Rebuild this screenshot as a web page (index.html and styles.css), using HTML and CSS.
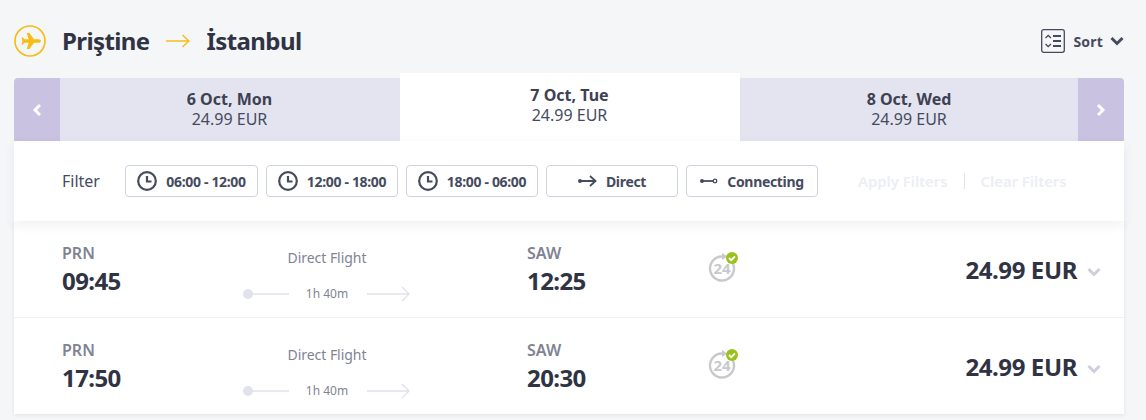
FILE: index.html
```html
<!DOCTYPE html>
<html lang="en">
<head>
<meta charset="utf-8">
<title>Flights</title>
<link rel="stylesheet" href="styles.css">
</head>
<body>
<main class="wrap">
  <header class="head">
    <svg class="plane-ico" viewBox="0 0 32 32" width="32" height="32"><circle cx="16" cy="16" r="15" fill="none" stroke="#f6bd16" stroke-width="1.700"/><path fill="#f6bd16" d="M27 16c0-1.100-1.200-1.800-2.500-1.800h-4.500L15.500 8h-2.800l2 6.200h-4.400L8.700 12.300H7.600L8.400 16l-.8 3.700h1.100l1.600-1.900h4.400l-2 6.200h2.800l4.500-6.200h4.500c1.300 0 2.500-.7 2.500-1.800z"/></svg>
    <h1 class="city">Priştine</h1>
    <svg class="route-arrow" viewBox="0 0 24 14" width="24" height="14"><path d="M0 7h23M16.500 1l6.500 6-6.500 6" fill="none" stroke="#f6bd16" stroke-width="1.500"/></svg>
    <h1 class="city">İstanbul</h1>
    <div class="sort">
      <svg viewBox="0 0 24 24" width="24" height="24"><rect x=".7" y=".7" width="22.600" height="22.600" rx="2" fill="none" stroke="#454b5e" stroke-width="1.300"/><path d="M4.500 9l2.700-2.500L10 9M4.500 15l2.700 2.500L10 15" fill="none" stroke="#454b5e" stroke-width="1.300"/><path d="M12 7h8M12 12h8M12 17h8" stroke="#454b5e" stroke-width="1.800"/></svg>
      <span class="sort-label">Sort</span>
      <svg viewBox="0 0 14 10" width="14" height="10"><path d="M1.500 2l5.500 5.500L12.500 2" fill="none" stroke="#454b5e" stroke-width="3"/></svg>
    </div>
  </header>

  <nav class="days">
    <button class="day-nav day-nav-prev"><svg viewBox="0 0 10 14" width="10" height="14"><path d="M8 2L3 7l5 5" fill="none" stroke="#fff" stroke-width="3"/></svg></button>
    <div class="day"><strong>6 Oct, Mon</strong><span>24.99 EUR</span></div>
    <div class="day day-active"><strong>7 Oct, Tue</strong><span>24.99 EUR</span></div>
    <div class="day day-last"><strong>8 Oct, Wed</strong><span>24.99 EUR</span></div>
    <button class="day-nav day-nav-next"><svg viewBox="0 0 10 14" width="10" height="14"><path d="M2 2l5 5-5 5" fill="none" stroke="#fff" stroke-width="3"/></svg></button>
  </nav>

  <section class="filters">
    <span class="filter-label">Filter</span>
    <button class="chip"><svg viewBox="0 0 20 20" width="20" height="20"><circle cx="10" cy="10" r="8.800" fill="none" stroke="#454b5e" stroke-width="2.200"/><path d="M10 5v5.500h4.500" fill="none" stroke="#454b5e" stroke-width="2.200"/></svg>06:00 - 12:00</button>
    <button class="chip"><svg viewBox="0 0 20 20" width="20" height="20"><circle cx="10" cy="10" r="8.800" fill="none" stroke="#454b5e" stroke-width="2.200"/><path d="M10 5v5.500h4.500" fill="none" stroke="#454b5e" stroke-width="2.200"/></svg>12:00 - 18:00</button>
    <button class="chip"><svg viewBox="0 0 20 20" width="20" height="20"><circle cx="10" cy="10" r="8.800" fill="none" stroke="#454b5e" stroke-width="2.200"/><path d="M10 5v5.500h4.500" fill="none" stroke="#454b5e" stroke-width="2.200"/></svg>18:00 - 06:00</button>
    <button class="chip"><svg viewBox="0 0 19 12" width="19" height="12"><circle cx="2" cy="6" r="2" fill="#454b5e"/><path d="M1 6h16.500M12 1l5.500 5-5.500 5" fill="none" stroke="#454b5e" stroke-width="1.800"/></svg>Direct</button>
    <button class="chip"><svg viewBox="0 0 18 8" width="18" height="8"><circle cx="2" cy="4" r="2" fill="#454b5e"/><path d="M1 4h12" stroke="#454b5e" stroke-width="1.800"/><circle cx="15" cy="4" r="1.800" fill="#fff" stroke="#454b5e" stroke-width="1.300"/></svg>Connecting</button>
    <div class="filter-actions">
      <span>Apply Filters</span>
      <i class="filter-sep"></i>
      <span>Clear Filters</span>
    </div>
  </section>

  <section class="flights">
    <article class="flight">
      <div class="point"><span class="code">PRN</span><span class="time">09:45</span></div>
      <div class="route">
        <span class="route-type">Direct Flight</span>
        <div class="route-line">
          <svg viewBox="0 0 46 10" width="46" height="10"><circle cx="5" cy="5" r="5" fill="#e0e2ed"/><path d="M5 5h41" stroke="#e0e2ed" stroke-width="1.400"/></svg>
          <span class="route-time">1h 40m</span>
          <svg viewBox="0 0 44 16" width="44" height="16"><path d="M0 8h42M35 1l7 7-7 7" fill="none" stroke="#e0e2ed" stroke-width="1.400"/></svg>
        </div>
      </div>
      <div class="point point-end"><span class="code">SAW</span><span class="time">12:25</span></div>
      <svg class="badge" viewBox="0 0 32 32" width="32" height="32"><path d="M21.700 7.300A12 12 0 1 1 14 4.500" fill="none" stroke="#c8c9cc" stroke-width="2.400"/><path d="M14 1l5.500 3.500L14 8z" fill="#c8c9cc"/><text x="14" y="22" class="badge-text">24</text><circle cx="24" cy="6" r="6" fill="#9bc21c"/><path d="M21 6l2.200 2.200L27 4.400" fill="none" stroke="#fff" stroke-width="1.800"/></svg>
      <div class="price"><span>24.99 EUR</span><svg class="price-chevron" viewBox="0 0 14 10" width="14" height="10"><path d="M1.500 2l5.500 5.500L12.500 2" fill="none" stroke="#cdd0dc" stroke-width="3"/></svg></div>
    </article>
    <article class="flight">
      <div class="point"><span class="code">PRN</span><span class="time">17:50</span></div>
      <div class="route">
        <span class="route-type">Direct Flight</span>
        <div class="route-line">
          <svg viewBox="0 0 46 10" width="46" height="10"><circle cx="5" cy="5" r="5" fill="#e0e2ed"/><path d="M5 5h41" stroke="#e0e2ed" stroke-width="1.400"/></svg>
          <span class="route-time">1h 40m</span>
          <svg viewBox="0 0 44 16" width="44" height="16"><path d="M0 8h42M35 1l7 7-7 7" fill="none" stroke="#e0e2ed" stroke-width="1.400"/></svg>
        </div>
      </div>
      <div class="point point-end"><span class="code">SAW</span><span class="time">20:30</span></div>
      <svg class="badge" viewBox="0 0 32 32" width="32" height="32"><path d="M21.700 7.300A12 12 0 1 1 14 4.500" fill="none" stroke="#c8c9cc" stroke-width="2.400"/><path d="M14 1l5.500 3.500L14 8z" fill="#c8c9cc"/><text x="14" y="22" class="badge-text">24</text><circle cx="24" cy="6" r="6" fill="#9bc21c"/><path d="M21 6l2.200 2.200L27 4.400" fill="none" stroke="#fff" stroke-width="1.800"/></svg>
      <div class="price"><span>24.99 EUR</span><svg class="price-chevron" viewBox="0 0 14 10" width="14" height="10"><path d="M1.500 2l5.500 5.500L12.500 2" fill="none" stroke="#cdd0dc" stroke-width="3"/></svg></div>
    </article>
  </section>
</main>
</body>
</html>
```

FILE: styles.css
```css
* { box-sizing: border-box; }
html, body { margin: 0; padding: 0; height: 100%; overflow: hidden; }
body { background: #f5f6f8; font-family: "Noto Sans", "Open Sans", sans-serif; color: #2f3343; }
.wrap { margin: 0 22px 0 14px; }

.head { display: flex; align-items: center; height: 73px; padding-top: 9px; }
.plane-ico { margin-right: 16px; }
.city { margin: 0; font-size: 24px; font-weight: 700; letter-spacing: -.6px; line-height: 32px; color: #2f3343; }
.route-arrow { margin: 0 17px 0 16px; }
.sort { margin-left: auto; display: flex; align-items: center; }
.sort-label { margin: 0 7px 0 8px; font-size: 14px; font-weight: 700; letter-spacing: .2px; color: #454b5e; }

.days { display: flex; align-items: flex-end; height: 68px; }
.day-nav { flex: none; width: 46px; height: 63px; border: 0; padding: 0; background: #c9c2e0; display: flex; align-items: center; justify-content: center; }
.day-nav-prev { border-top-left-radius: 4px; }
.day-nav-next { border-top-right-radius: 4px; }
.day { flex: none; width: 340px; height: 63px; padding: 0 1px 1px 0; background: #e4e4f0; display: flex; flex-direction: column; align-items: center; justify-content: center; font-size: 16px; line-height: 20px; color: #454b5e; }
.day strong { font-weight: 700; color: #3d4152; }
.day-active { height: 68px; background: #fff; padding-bottom: 4px; }
.day-last { width: 338px; padding-right: 0; }

.filters { display: flex; align-items: center; height: 80px; padding-left: 48px; background: #fff; box-shadow: 0 4px 10px rgba(60, 70, 100, .08); position: relative; }
.filter-label { width: 63px; font-size: 16px; color: #454b5e; }
.chip { width: 132px; height: 32px; margin-right: 8px; padding: 0; border: 1px solid #cfd2e0; border-radius: 4px; background: #fff; display: flex; align-items: center; justify-content: center; gap: 9px; font-family: inherit; font-size: 14px; font-weight: 700; letter-spacing: -.33px; color: #454b5e; }
.filter-label + .chip { width: 133px; }
.filter-actions { display: flex; align-items: center; margin-left: 32px; font-size: 15px; font-weight: 600; letter-spacing: -.08px; color: #eceef4; }
.filter-sep { width: 1px; height: 16px; margin: 0 16px; background: #e0e2ed; }

.flights { background: #fff; box-shadow: 0 1px 4px rgba(60, 70, 100, .12); }
.flight { display: flex; height: 97px; padding-left: 48px; position: relative; border-bottom: 1px solid #f0f1f5; }
.flight:last-child { height: 96px; border-bottom: 0; }
.point { width: 155px; display: flex; flex-direction: column; padding-top: 21px; }
.point-end { width: 181px; }
.code { font-size: 16px; line-height: 22px; font-weight: 600; color: #7f8392; }
.time { font-size: 24px; line-height: 34px; font-weight: 700; letter-spacing: -.6px; color: #2f3343; }
.route { width: 168px; margin: 0 116px 0 26px; padding: 27px 0 0; display: flex; flex-direction: column; align-items: center; }
.route-type { font-size: 14px; line-height: 20px; letter-spacing: -.05px; color: #7f8392; }
.route-line { width: 100%; display: flex; justify-content: space-between; align-items: center; margin-top: 17px; font-size: 12px; color: #7f8392; }
.route-time { padding-right: 2px; }
.badge { margin-top: 31px; }
.badge-text { font-size: 15px; font-weight: 700; fill: #c8c9cc; text-anchor: middle; font-family: "Noto Sans", sans-serif; }
.price { margin-left: auto; margin-right: 23px; display: flex; align-items: center; gap: 10px; height: 30px; margin-top: 33px; font-size: 24px; font-weight: 700; letter-spacing: -.4px; color: #2f3343; }
.price-chevron { margin-top: 5px; }
```
